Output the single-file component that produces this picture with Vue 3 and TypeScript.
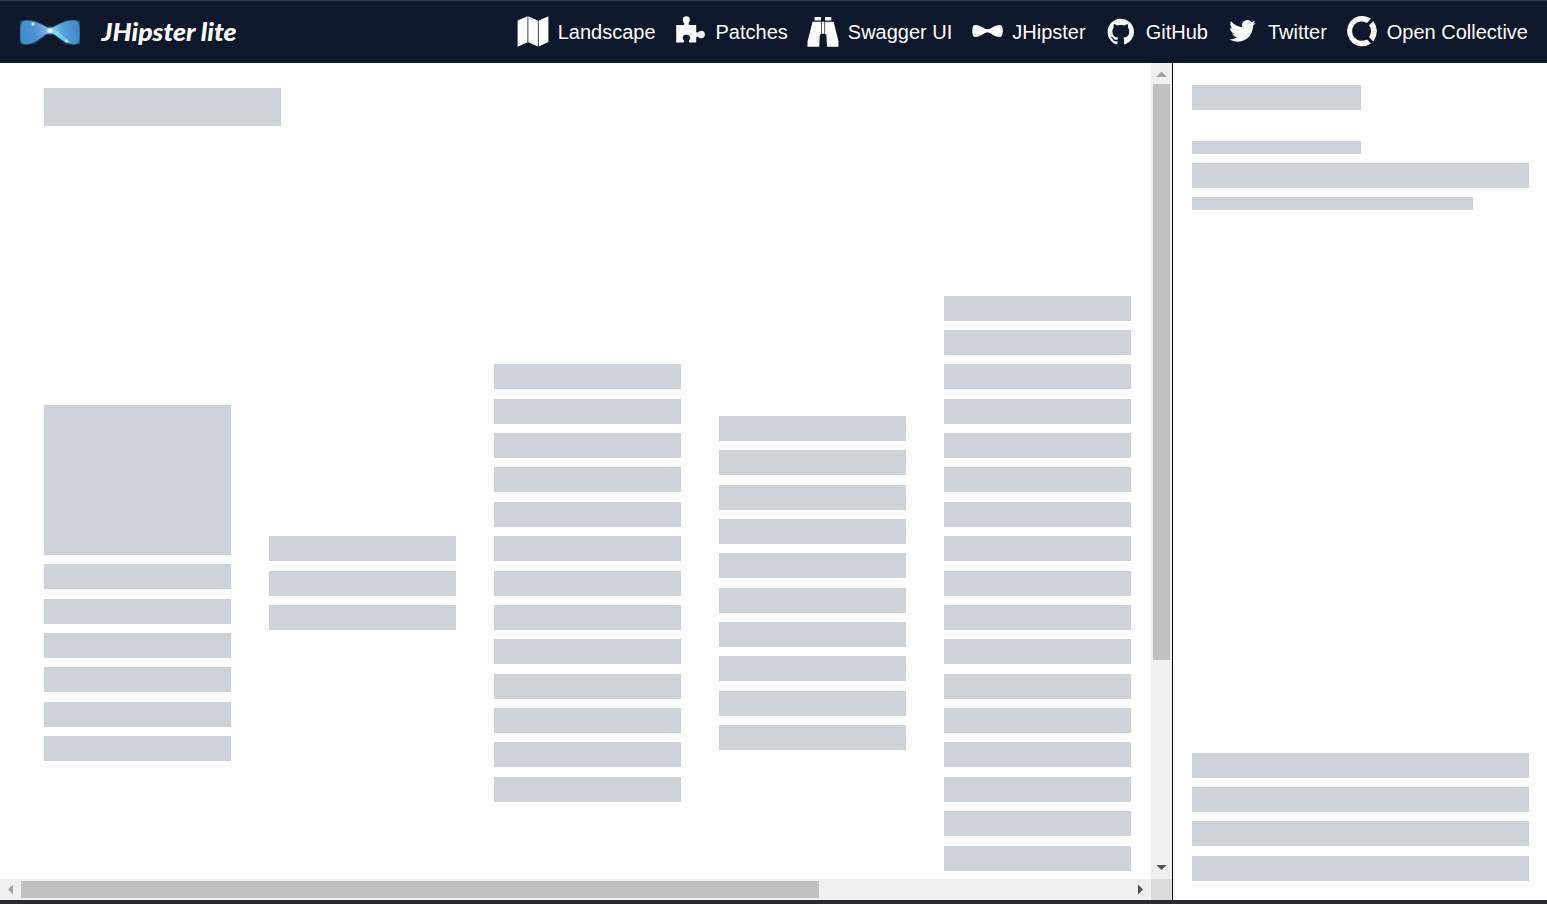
<script setup lang="ts">
interface MenuItem {
  id: string
  label: string
}

interface Column {
  rows: number
  card?: boolean
}

const menu: MenuItem[] = [
  { id: 'map', label: 'Landscape' },
  { id: 'puzzle', label: 'Patches' },
  { id: 'binoculars', label: 'Swagger UI' },
  { id: 'bowtie', label: 'JHipster' },
  { id: 'github', label: 'GitHub' },
  { id: 'twitter', label: 'Twitter' },
  { id: 'collective', label: 'Open Collective' },
]

const columns: Column[] = [
  { rows: 6, card: true },
  { rows: 3 },
  { rows: 13 },
  { rows: 10 },
  { rows: 17 },
]
</script>

<template>
  <div class="app">
    <header class="header">
      <a class="brand">
        <svg class="logo" width="64" height="30" viewBox="0 0 64 30">
          <defs>
            <linearGradient id="tie-left" x1="0" x2="1" y1="0.6" y2="0.4">
              <stop offset="0" stop-color="#3a8ccb" />
              <stop offset="0.5" stop-color="#5190d4" />
              <stop offset="1" stop-color="#8fb6e6" />
            </linearGradient>
            <linearGradient id="tie-right" x1="0" x2="1" y1="0.5" y2="0.4">
              <stop offset="0" stop-color="#9adcf2" />
              <stop offset="0.45" stop-color="#559fdb" />
              <stop offset="1" stop-color="#4287c8" />
            </linearGradient>
            <radialGradient id="glow">
              <stop offset="0" stop-color="#fff" />
              <stop offset="0.35" stop-color="#d5f6ff" stop-opacity="0.9" />
              <stop offset="1" stop-color="#5cc4f5" stop-opacity="0" />
            </radialGradient>
            <linearGradient id="halo">
              <stop offset="0" stop-color="#12506b" />
              <stop offset="0.3" stop-color="#10354f" />
              <stop offset="0.5" stop-color="#0f172a" stop-opacity="0" />
              <stop offset="0.7" stop-color="#10354f" />
              <stop offset="1" stop-color="#12506b" />
            </linearGradient>
          </defs>
          <path d="M2 3.500H17L32 11L47 3.500H62V27.500H47L32 17L17 27.500H2Z" fill="url(#halo)" />
          <path d="M32 11.800Q23 6.500 15 4.300Q9 3 5.500 4Q3 5.500 2.700 13Q2.300 20 3 24Q4 27.500 9 27.200Q16 26 22 21.500Q28 17 32 15.200Z" fill="url(#tie-left)" stroke="#2c96bb" stroke-width="0.6" />
          <path d="M32 11.800Q41 6.500 49 4.300Q55 3 58.500 4Q61 5.500 61.300 13Q61.700 20 61 24Q60 27.500 55 27.200Q48 26 42 21.500Q36 17 32 15.200Z" fill="url(#tie-right)" stroke="#2c96bb" stroke-width="0.6" />
          <path d="M32 14L36 13.500Q45 17 52 25.500Q46 25 41 20.500Z" fill="#8be9f5" opacity="0.55" />
          <circle cx="32" cy="13.700" r="5" fill="url(#glow)" />
          <circle cx="15" cy="7" r="2.500" fill="url(#glow)" />
          <circle cx="48.500" cy="24" r="2.500" fill="url(#glow)" />
        </svg>
        <svg class="brand-name" width="140" height="44" viewBox="0 0 140 44">
          <text x="2.500" y="31" textLength="135" lengthAdjust="spacingAndGlyphs">JHipster lite</text>
        </svg>
      </a>
      <nav class="menu">
        <a v-for="item in menu" :key="item.id" class="menu-item">
          <svg class="icon" width="31" height="32" viewBox="0 0 31 32">
            <path v-if="item.id === 'map'" d="M.6 4.600L10.500.2V26.200L.6 30.800ZM11.300.2L20.900 4.500V30.600L11.300 26.200ZM21.700 4.500L31.400.2V26L21.700 30.600Z" />
            <path v-else-if="item.id === 'puzzle'" d="M1.200 9H8Q9.700 9 9.200 7.500Q7.800 5.500 7.800 3.500Q8 .2 11.300.2Q14.700.2 14.900 3.500Q14.900 5.500 13.500 7.300Q13 9 14.700 9H21.200V15.700Q21.500 17 23 16.300Q24.500 14.700 26.500 14.700Q29.900 15 29.900 18.600Q29.800 22 26.500 22.300Q24.500 22.300 23 20.700Q21.500 20 21.200 21.300V26.600H15Q13.200 26.300 14 24.500Q15.500 23 15.200 21Q14.300 18.500 11.300 18.500Q8 18.700 7.700 21.300Q7.600 23 8.800 24.500Q9.800 26.300 8 26.600H1.200Z" />
            <path v-else-if="item.id === 'binoculars'" d="M7.600 1H13.900V4.500H7.600ZM18 1H24.300V4.500H18ZM5.600 5.800H14.100V18.200H12.900L12.200 30.700H.5V25.500ZM14.800 5.800H17.400V17.700H14.800ZM18.100 5.800H26.600L31.500 25.500V30.700H20.100L19.300 18.200H18.100Z" />
            <path v-else-if="item.id === 'bowtie'" d="M2.600 9.300Q6 8.200 10.500 10.700Q14.500 13.300 16.500 13.300Q18.500 13.300 22.500 10.700Q27 8.200 30 9.200Q31.800 10.600 31.800 15Q31.800 20 29.500 21Q26.500 21.600 22 19Q18 16.300 16.500 16.300Q14.500 16.300 10.500 19Q6.500 21.600 3.500 20.800Q1.200 20.200 1.300 15Q1.400 10.500 2.600 9.300Z" />
            <path v-else-if="item.id === 'github'" transform="translate(2.600 2.700) scale(1.650)" d="M8 0C3.580 0 0 3.580 0 8c0 3.540 2.290 6.530 5.470 7.590.4.070.55-.17.55-.38 0-.19-.01-.82-.01-1.490-2.010.37-2.530-.49-2.690-.94-.09-.23-.48-.94-.82-1.130-.28-.15-.68-.52-.01-.53.63-.01 1.080.58 1.230.82.72 1.210 1.870.87 2.330.66.07-.52.28-.87.51-1.070-1.780-.2-3.640-.89-3.640-3.950 0-.87.31-1.590.82-2.150-.08-.2-.36-1.020.08-2.120 0 0 .67-.21 2.200.82.64-.18 1.320-.27 2-.27.68 0 1.360.09 2 .27 1.530-1.040 2.200-.82 2.200-.82.44 1.100.16 1.920.08 2.120.51.56.82 1.270.82 2.150 0 3.070-1.870 3.750-3.650 3.950.29.25.54.73.54 1.480 0 1.070-.01 1.930-.01 2.200 0 .21.15.46.55.38A8.013 8.013 0 0016 8c0-4.420-3.580-8-8-8z" />
            <path v-else-if="item.id === 'twitter'" transform="translate(2.200 1.750) scale(1.104)" d="M23.953 4.570a10 10 0 01-2.825.775 4.958 4.958 0 002.163-2.723c-.951.555-2.005.959-3.127 1.184a4.920 4.920 0 00-8.384 4.482C7.690 8.095 4.067 6.130 1.640 3.162a4.822 4.822 0 00-.666 2.475c0 1.710.87 3.213 2.188 4.096a4.904 4.904 0 01-2.228-.616v.06a4.923 4.923 0 003.946 4.827 4.996 4.996 0 01-2.212.085 4.936 4.936 0 004.604 3.417 9.867 9.867 0 01-6.102 2.105c-.39 0-.779-.023-1.170-.067a13.995 13.995 0 007.557 2.209c9.053 0 13.998-7.496 13.998-13.985 0-.21 0-.42-.015-.63A9.935 9.935 0 0024 4.590z" />
            <path v-else d="M25 2.600L20.900 6.900A9.700 9.700 0 1 0 20.900 23.400L25 27.600A15.200 15.200 0 1 1 25 2.600ZM27.300 5.100Q34.500 15.200 27.300 25.400L23.100 21.200Q27.100 15.200 23.100 9.300Z" />
          </svg>
          <span>{{ item.label }}</span>
        </a>
      </nav>
    </header>

    <main class="main">
      <section class="viewport">
        <div class="landscape">
          <div class="block title"></div>
          <div class="columns">
            <div v-for="(column, index) in columns" :key="index" class="column">
              <div v-if="column.card" class="block card"></div>
              <div v-for="row in column.rows" :key="row" class="block row"></div>
            </div>
          </div>
        </div>
        <div class="track vertical">
          <svg class="arrow" width="21" height="21" viewBox="0 0 21 21"><path d="M5 14L10.500 8.500L16 14Z" fill="#a3a3a3" /></svg>
          <div class="thumb"></div>
          <svg class="arrow" width="21" height="21" viewBox="0 0 21 21"><path d="M5.500 7H15.500L10.500 12Z" fill="#505050" /></svg>
        </div>
        <div class="track horizontal">
          <svg class="arrow" width="21" height="21" viewBox="0 0 21 21"><path d="M13 5.500V15.500L8 10.500Z" fill="#a3a3a3" /></svg>
          <div class="thumb"></div>
          <svg class="arrow" width="21" height="21" viewBox="0 0 21 21"><path d="M8 5.500V15.500L13 10.500Z" fill="#505050" /></svg>
        </div>
        <div class="corner"></div>
      </section>

      <aside class="panel">
        <div class="block panel-title"></div>
        <div class="panel-body">
          <div class="block line half"></div>
          <div class="block row"></div>
          <div class="block line long"></div>
        </div>
        <div class="panel-actions">
          <div v-for="action in 4" :key="action" class="block row"></div>
        </div>
      </aside>
    </main>
  </div>
</template>

<style>
body {
  background: #fff;
  overflow: hidden;
}
</style>

<style scoped>
.app {
  box-sizing: border-box;
  display: flex;
  flex-direction: column;
  height: 904px;
  border-bottom: 4px solid #292a33;
  font-family: "Liberation Sans", Arial, sans-serif;
  font-size: 20px;
}

.header {
  box-sizing: border-box;
  display: flex;
  flex: none;
  align-items: center;
  justify-content: space-between;
  height: 63px;
  padding: 0 19px 0 18px;
  border-top: 1px solid #2b3647;
  background: #0f172a;
  color: #fff;
}

.brand {
  display: flex;
  align-items: center;
  gap: 17px;
}

.logo,
.icon,
.brand-name,
.arrow {
  display: block;
  flex: none;
}

.logo {
  margin-bottom: 1px;
}

.brand-name text {
  fill: #fff;
  font-family: Lato, sans-serif;
  font-size: 25px;
  font-style: italic;
  font-weight: 900;
}

.menu {
  display: flex;
  gap: 19px;
}

.menu-item {
  display: flex;
  align-items: center;
  gap: 10px;
  white-space: nowrap;
}

.icon {
  overflow: visible;
  fill: #fff;
}

.main {
  display: flex;
  flex: 1;
  min-height: 0;
}

.viewport {
  display: grid;
  grid-template-columns: 1151px 21px;
  grid-template-rows: 816px 21px;
}

.landscape {
  box-sizing: border-box;
  display: flex;
  flex-direction: column;
  padding: 25px 20px 8px 43.750px;
}

.block {
  flex: none;
  background: #ced3da;
}

.title {
  width: 237px;
  height: 38px;
}

.columns {
  display: flex;
  align-items: center;
  gap: 37.500px;
  margin-top: 169.530px;
}

.column {
  display: flex;
  flex-direction: column;
  gap: 9.375px;
  width: 187.500px;
}

.card {
  height: 150px;
}

.row {
  height: 25px;
}

.track {
  display: flex;
  background: #f0f0f0;
}

.vertical {
  flex-direction: column;
}

.vertical .thumb {
  height: 576px;
  margin: 0 2px auto;
}

.horizontal .thumb {
  width: 798px;
  margin: 2px auto 2px 0;
}

.thumb {
  background: #c1c1c1;
}

.corner {
  background: #dcdcdc;
}

.panel {
  box-sizing: border-box;
  display: flex;
  flex: 1;
  flex-direction: column;
  padding: 22px 18px 19.250px 19px;
  border-left: 1px solid #0b0d12;
}

.panel-title {
  width: 169px;
  height: 25px;
}

.panel-body {
  display: flex;
  flex-direction: column;
  gap: 9px;
  margin-top: 31px;
}

.line {
  height: 13px;
}

.half {
  width: 169px;
}

.long {
  width: 281px;
}

.panel-actions {
  display: flex;
  flex-direction: column;
  gap: 9.375px;
  margin-top: auto;
}
</style>
